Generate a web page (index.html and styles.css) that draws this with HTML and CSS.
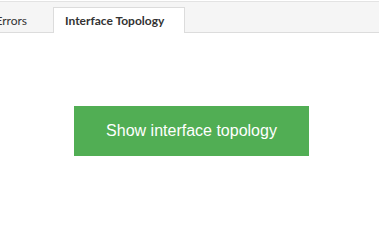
FILE: index.html
```html
<!DOCTYPE html>
<html lang="en">
<head>
    <meta charset="UTF-8">
    <title>Interface Topology</title>
    <link rel="stylesheet" href="styles.css">
</head>
<body>
    <div class="tabs">
        <div class="tab-list">
            <div class="tab first">Errors</div>
            <div class="tab active">Interface Topology</div>
        </div>
    </div>
    <section class="content">
        <button class="show-btn">Show interface topology</button>
    </section>
</body>
</html>
```

FILE: styles.css
```css
body {
    margin: 0;
    background-color: #ffffff;
    font-family: "Lato", "Noto Sans", sans-serif;
    overflow: hidden;
}
.tabs {
    margin-top: 1px;
    background-color: #f5f5f5;
    border-top: 1px solid #e3e3e3;
    border-bottom: 1px solid #dcdcdc;
    box-sizing: border-box;
    height: 32px;
}
.tab-list {
    display: flex;
    align-items: flex-end;
    height: 100%;
    margin-left: -26px;
}
.tab {
    font-size: 12px;
    color: #333333;
    height: 25px;
    line-height: 27px;
    box-sizing: border-box;
    white-space: nowrap;
}
.tab.first {
    width: 66px;
    padding-right: 13px;
    margin-right: 13px;
    text-align: right;
}
.tab.active {
    font-weight: bold;
    background-color: #ffffff;
    border: 1px solid #dcdcdc;
    border-bottom: none;
    margin-bottom: -1px;
    width: 132px;
    height: 26px;
    padding: 0 11px;
    line-height: 26px;
}
.content {
    display: flex;
    justify-content: center;
    padding: 73px 0 0 4px;
}
.show-btn {
    width: 235px;
    height: 50px;
    border: none;
    background-color: #51ae54;
    color: #ffffff;
    font-family: "Liberation Sans", Arial, sans-serif;
    font-size: 16px;
}
```
